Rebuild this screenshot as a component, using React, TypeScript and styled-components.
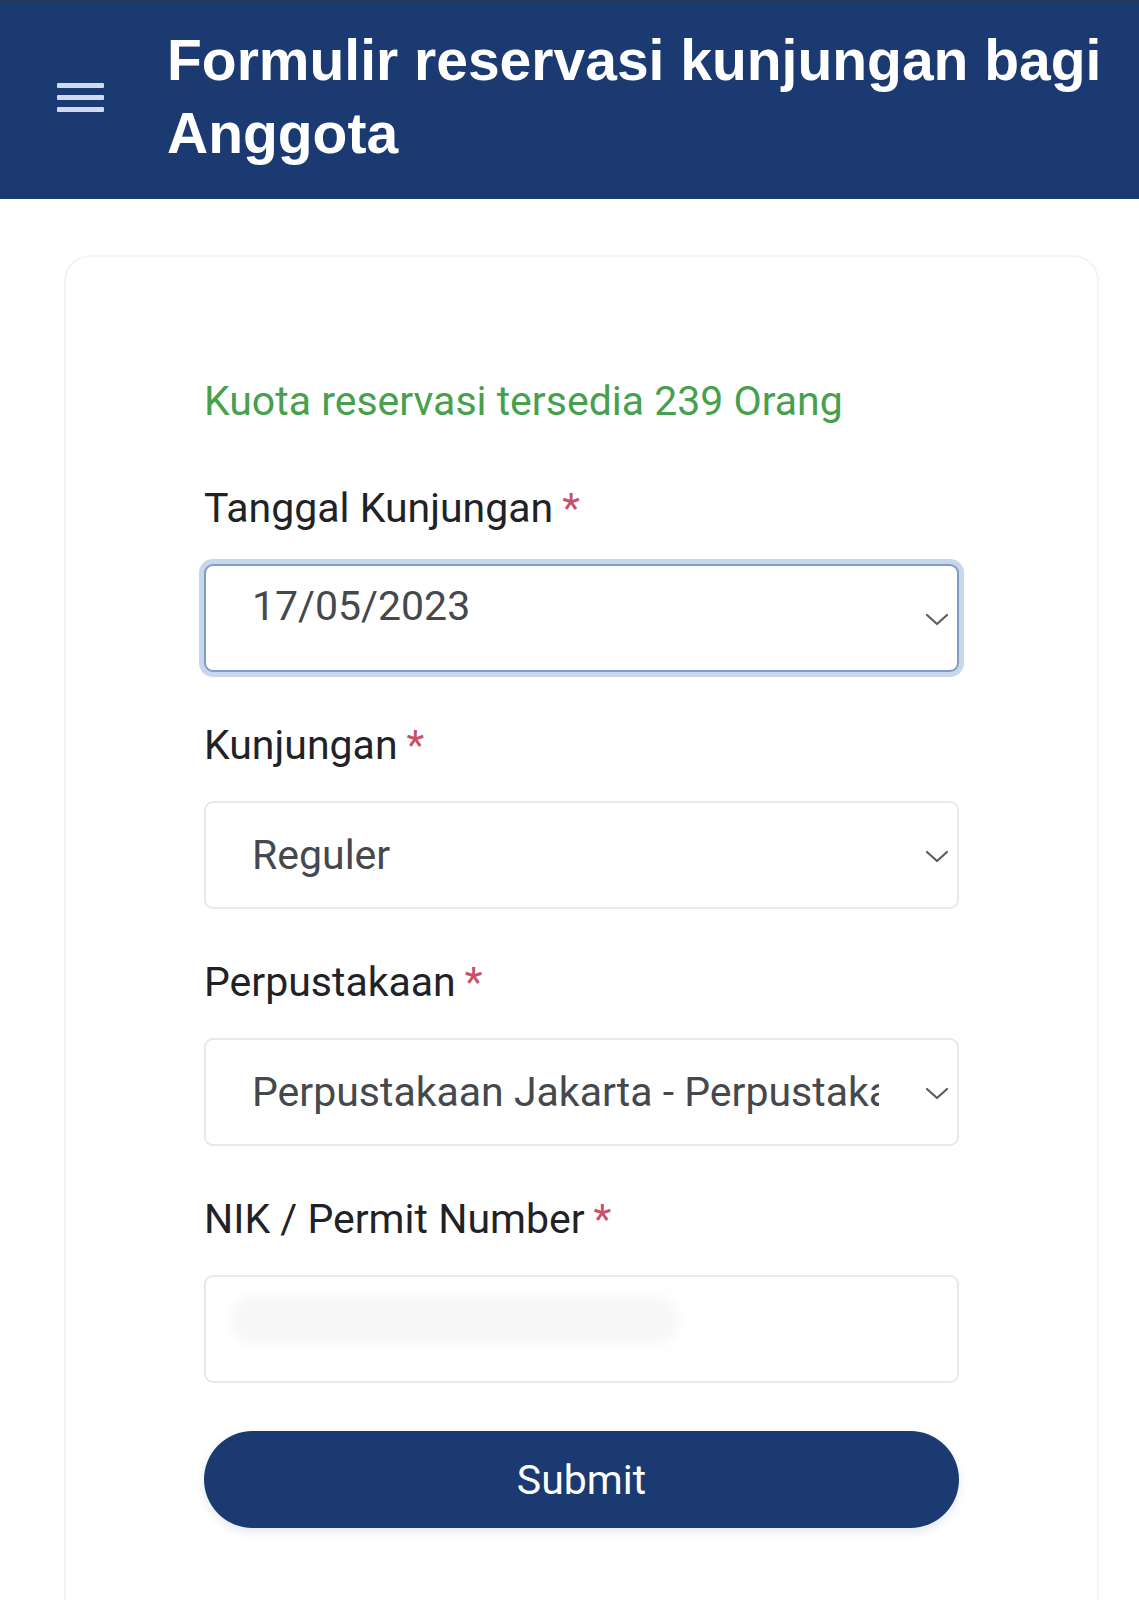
import React from 'react';
import styled, { createGlobalStyle } from 'styled-components';

const GlobalStyle = createGlobalStyle`
  html, body {
    margin: 0;
    padding: 0;
    background: #ffffff;
  }
  body {
    font-family: Roboto, "Noto Sans", sans-serif;
  }
  #root {
    height: 1600px;
    overflow: hidden;
  }
`;

const Page = styled.div`
  display: flex;
  flex-direction: column;
  width: 1139px;
  min-height: 1600px;
  background: #ffffff;
`;

const Header = styled.header`
  display: flex;
  align-items: center;
  box-sizing: border-box;
  height: 199px;
  padding: 0 10px 0 57px;
  gap: 63px;
  background: #1b3a72;
  border-top: 4px solid #253b5e;
`;

const MenuButton = styled.button`
  display: flex;
  flex-direction: column;
  flex-shrink: 0;
  gap: 7px;
  width: 47px;
  padding: 0;
  margin-top: -8px;
  background: none;
  border: none;
`;

const MenuBar = styled.span`
  display: block;
  height: 5px;
  border-radius: 1px;
  background: #cfdaee;
`;

const Title = styled.h1`
  margin: -9px 0 0;
  font-family: "Liberation Sans", Arial, sans-serif;
  font-weight: 700;
  font-size: 57px;
  line-height: 73px;
  color: #ffffff;
`;

const Body = styled.main`
  display: flex;
  justify-content: center;
  padding: 56px 40px 0 64px;
`;

const Card = styled.section`
  box-sizing: border-box;
  width: 1035px;
  min-height: 1400px;
  padding: 119px 138px 0;
  border: 2px solid #f4f4f4;
  border-radius: 26px;
  background: #ffffff;
`;

const Quota = styled.p`
  margin: 0 0 57px;
  font-size: 41px;
  line-height: 50px;
  color: #46a04e;
`;

const Field = styled.div`
  display: flex;
  flex-direction: column;
  margin-bottom: 48px;
`;

const Label = styled.label`
  margin-bottom: 31px;
  font-size: 41px;
  line-height: 50px;
  color: #1f2226;
`;

const Required = styled.span`
  margin-left: 9px;
  color: #c9506a;
`;

const Control = styled.div`
  position: relative;
  display: flex;
`;

const boxStyles = `
  box-sizing: border-box;
  width: 100%;
  height: 108px;
  margin: 0;
  font-family: Roboto, "Noto Sans", sans-serif;
  font-size: 41px;
  color: #45484c;
  background: #ffffff;
  border-radius: 9px;
  outline: none;
  appearance: none;
  -webkit-appearance: none;
`;

const TextBox = styled.input<{ $focused?: boolean }>`
  ${boxStyles}
  padding: ${(p) => (p.$focused ? '0 80px 24px 46px' : '0 80px 0 46px')};
  border: 2px solid ${(p) => (p.$focused ? '#7f9cc8' : '#e8e8e8')};
  box-shadow: ${(p) => (p.$focused ? '0 0 0 5px #c9d7ec' : 'none')};
`;

const Select = styled.select`
  ${boxStyles}
  padding: 0 78px 0 46px;
  border: 2px solid #e8e8e8;
`;

const Chevron = styled.svg`
  position: absolute;
  right: 10px;
  top: 50%;
  width: 24px;
  height: 14px;
  margin-top: -5px;
  pointer-events: none;
`;

const Redacted = styled.span`
  position: absolute;
  left: 26px;
  top: 20px;
  width: 450px;
  height: 50px;
  border-radius: 25px;
  background: #f7f7f7;
  filter: blur(6px);
  pointer-events: none;
`;

const SubmitButton = styled.button`
  width: 100%;
  height: 97px;
  margin-top: 0;
  border: none;
  border-radius: 49px;
  background: #1b3a72;
  color: #ffffff;
  font-family: Roboto, "Noto Sans", sans-serif;
  font-size: 41px;
  box-shadow: 0 4px 10px rgba(27, 58, 114, 0.12);
`;

const ChevronIcon = () => (
  <Chevron viewBox="0 0 24 14">
    <path d="M2 2 L12 11 L22 2" fill="none" stroke="#5a5d61" strokeWidth="2.2" strokeLinecap="round" strokeLinejoin="round" />
  </Chevron>
);

const App: React.FC = () => {
  return (
    <Page>
      <GlobalStyle />
      <Header>
        <MenuButton aria-label="menu">
          <MenuBar />
          <MenuBar />
          <MenuBar />
        </MenuButton>
        <Title>Formulir reservasi kunjungan bagi Anggota</Title>
      </Header>

      <Body>
        <Card>
          <Quota>Kuota reservasi tersedia 239 Orang</Quota>

          <Field>
            <Label>
              Tanggal Kunjungan<Required>*</Required>
            </Label>
            <Control>
              <TextBox $focused readOnly value="17/05/2023" />
              <ChevronIcon />
            </Control>
          </Field>

          <Field>
            <Label>
              Kunjungan<Required>*</Required>
            </Label>
            <Control>
              <Select defaultValue="reguler">
                <option value="reguler">Reguler</option>
              </Select>
              <ChevronIcon />
            </Control>
          </Field>

          <Field>
            <Label>
              Perpustakaan<Required>*</Required>
            </Label>
            <Control>
              <Select defaultValue="jakarta">
                <option value="jakarta">Perpustakaan Jakarta - Perpustakaan Daerah</option>
              </Select>
              <ChevronIcon />
            </Control>
          </Field>

          <Field>
            <Label>
              NIK / Permit Number<Required>*</Required>
            </Label>
            <Control>
              <TextBox readOnly value="" />
              <Redacted />
            </Control>
          </Field>

          <SubmitButton type="button">Submit</SubmitButton>
        </Card>
      </Body>
    </Page>
  );
};

export default App;
